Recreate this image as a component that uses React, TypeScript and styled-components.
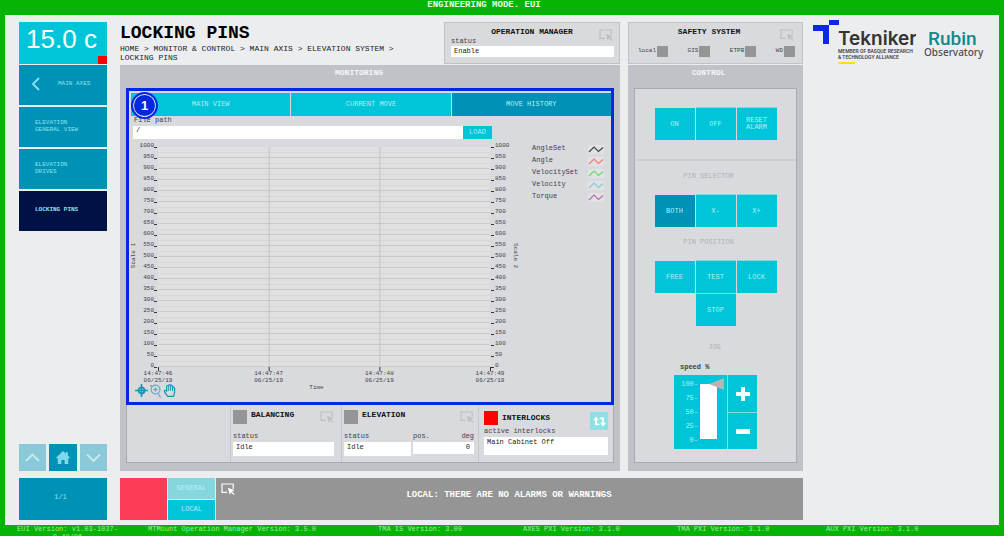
import React from "react";
import styled, { createGlobalStyle, css } from "styled-components";
import { FaRegHandPaper } from "react-icons/fa";

const color = {
  green: "#05b405",
  page: "#ecedef",
  panel: "#c1c2c7",
  inner: "#d9dade",
  line: "#c6c7cc",
  edge: "#a9aaaf",
  cyan: "#00c5d9",
  teal: "#0091b7",
  navy: "#001145",
  grey: "#959595",
  pale: "#8de2ec",
  text: "#404146",
  frame: "#0028e0",
};

const GlobalStyle = createGlobalStyle`
  * { box-sizing: border-box; }
  body {
    margin: 0;
    background: ${color.green};
    font-family: "Liberation Mono", "Courier New", monospace;
    font-size: 7px;
    line-height: 9px;
    color: ${color.text};
  }
  h1, h2, h3, p, ul, nav { margin: 0; padding: 0; }
  h2, h3 { font-size: 8px; line-height: 9px; }
  button, input { font: inherit; border: 0; padding: 0; margin: 0; border-radius: 0; }
  button { cursor: pointer; }
`;

const Page = styled.div`
  display: flex;
  flex-direction: column;
  min-height: 100vh;
`;

const ModeBar = styled.header`
  height: 15px;
  padding-right: 36px;
  text-align: center;
  color: #e4ffe4;
  font-size: 9px;
  font-weight: bold;
  line-height: 11px;
`;

const Body = styled.div`
  display: flex;
  flex: 1;
  margin: 0 5px;
  padding: 7px 0 5px 14px;
  background: ${color.page};
`;

const SideBar = styled.nav`
  display: flex;
  flex-direction: column;
  flex: 0 0 88px;
  margin-right: 13px;
`;

const Temperature = styled.div`
  position: relative;
  height: 42px;
  margin-bottom: 1px;
  padding-right: 3px;
  background: ${color.cyan};
  color: #fff;
  font: 26px/34px "Liberation Sans", Arial, sans-serif;
  text-align: center;
`;

const TemperatureFlag = styled.span`
  position: absolute;
  right: 0;
  bottom: 0;
  width: 9px;
  height: 8px;
  background: #f00;
`;

const SideList = styled.div`
  display: flex;
  flex-direction: column;
  gap: 2px;
`;

const SideItem = styled.button<{ $current?: boolean }>`
  display: flex;
  align-items: center;
  gap: 18px;
  height: 40px;
  padding: 0 12px 3px 16px;
  text-align: left;
  font-size: 6px;
  line-height: 7px;
  color: ${color.pale};
  background: ${(p) => (p.$current ? color.navy : color.teal)};
  font-weight: ${(p) => (p.$current ? "bold" : "normal")};
`;

const BackItem = styled(SideItem)`
  padding-left: 12px;
`;

const PageKeys = styled.div`
  display: grid;
  grid-template-columns: repeat(3, 1fr);
  gap: 3px;
  margin-top: auto;
`;

const PageKey = styled.button<{ $dim?: boolean }>`
  display: grid;
  place-items: center;
  height: 27px;
  background: ${(p) => (p.$dim ? "#8cc9d8" : color.teal)};
`;

const PageCount = styled.div`
  display: grid;
  place-items: center;
  height: 42px;
  padding: 0 5px 3px 0;
  margin-top: 7px;
  background: ${color.teal};
  color: ${color.pale};
`;

const Main = styled.main`
  display: grid;
  flex: 683 1 0;
  grid-template-columns: minmax(0, 500fr) minmax(0, 175fr);
  grid-template-rows: 42px 1fr 42px;
  column-gap: 8px;
  min-width: 0;
`;

const TitleRow = styled.div`
  display: flex;
  justify-content: space-between;
`;

const TitleBlock = styled.div`
  flex: 1;
  padding-right: 28px;
  color: #222;
  font-size: 8px;
`;

const Title = styled.h1`
  color: #000;
  font-size: 18px;
  line-height: 22px;
`;

const InfoCard = styled.section`
  border: 1px solid ${color.panel};
  background: ${color.inner};
`;

const ManagerCard = styled(InfoCard)`
  flex: 0 0 176px;
  padding: 4px 5px 0 6px;
`;

const CardHead = styled.div`
  display: flex;
  justify-content: center;
  height: 12px;
  color: #111;
  svg { margin: 2px 1px 0 auto; }
`;

const HeadTitle = styled.h2`
  flex: 1;
  text-align: center;
`;

const ManagerTitle = styled(HeadTitle)`
  padding-left: 14px;
`;

const Label = styled.label`
  display: block;
  white-space: nowrap;
`;

const TextBox = styled.input<{ $height?: number; $right?: boolean }>`
  display: block;
  width: 100%;
  height: ${(p) => p.$height ?? 14}px;
  padding: 0 4px ${(p) => ((p.$height ?? 14) > 12 ? 5 : 2)}px 3px;
  background: #fff;
  color: #222;
  text-align: ${(p) => (p.$right ? "right" : "left")};
`;

const InterlockBox = styled(TextBox)`
  padding-bottom: 8px;
`;

const ManagerLabel = styled(Label)`
  height: 7px;
  line-height: 5px;
`;

const SafetyCard = styled(InfoCard)`
  padding: 4px 7px 0 9px;
`;

const Lamps = styled.div`
  display: flex;
  justify-content: space-between;
  margin-top: 7px;
  font-size: 6px;
`;

const Lamp = styled.span`
  display: flex;
  gap: 1px;
`;

const LampLight = styled.i<{ $size: number; $on?: boolean }>`
  flex: none;
  width: ${(p) => p.$size}px;
  height: ${(p) => p.$size}px;
  background: ${(p) => (p.$on ? "#f00" : color.grey)};
`;

const Panel = styled.section`
  display: flex;
  flex-direction: column;
  margin: 1px 0 7px;
  padding: 0 6px 8px;
  background: ${color.panel};
`;

const PanelTitle = styled.h2`
  height: 23px;
  padding-top: 3px;
  color: #f5f5f8;
  text-align: center;
`;

const MonitoringTitle = styled(PanelTitle)`
  padding-right: 22px;
`;

const ControlTitle = styled(PanelTitle)`
  padding-right: 14px;
`;

const MonitorBox = styled.div`
  flex: 1;
  border: solid ${color.edge};
  border-width: 0 1px 1px;
  background: ${color.inner};
`;

const Highlight = styled.div`
  position: relative;
  height: 317px;
  margin: 0 -1px;
  padding: 2px 0 0 2px;
  border: 3px solid ${color.frame};
`;

const StepBadge = styled.span`
  position: absolute;
  top: 1px;
  left: 2px;
  display: grid;
  place-items: center;
  width: 27px;
  height: 27px;
  border: 2px solid ${color.frame};
  border-radius: 50%;
  background: ${color.frame};
  box-shadow: inset 0 0 0 1px #d8dcff;
  color: #fff;
  font: bold 13px/13px "Liberation Sans", Arial, sans-serif;
`;

const Tabs = styled.div`
  display: grid;
  grid-template-columns: repeat(3, 1fr);
  gap: 1px;
`;

const keyLook = css<{ $active?: boolean }>`
  background: ${(p) => (p.$active ? color.teal : color.cyan)};
  color: #b0eef4;
`;

const Tab = styled.button<{ $active?: boolean }>`
  ${keyLook}
  height: 23px;
`;

const PathRow = styled.div`
  display: grid;
  grid-template-columns: 1fr 29px;
  width: 361px;
  max-width: 100%;
  padding-left: 2px;
`;

const PathLabel = styled(Label)`
  grid-column: 1 / -1;
  height: 10px;
  padding-left: 1px;
`;

const LoadKey = styled.button`
  ${keyLook}
  height: 13px;
`;

const ChartRow = styled.div`
  display: flex;
  margin-top: 1px;
`;

const Chart = styled.figure`
  display: grid;
  flex: 1;
  grid-template-columns: 6px 21px minmax(0, 1fr) 20px 10px;
  margin: 0;
  font-size: 6px;
`;

const AxisName = styled.span<{ $flip?: boolean }>`
  writing-mode: vertical-rl;
  justify-self: center;
  align-self: center;
  line-height: 6px;
  transform: ${(p) => (p.$flip ? "rotate(180deg)" : "none")};
`;

const Axis = styled.ul<{ $right?: boolean }>`
  list-style: none;
  li {
    display: flex;
    flex-direction: ${(p) => (p.$right ? "row" : "row-reverse")};
    height: 11px;
    line-height: 11px;
  }
  li::before {
    content: "";
    width: 3px;
    height: 1px;
    margin: 7px 1px 0 ${(p) => (p.$right ? 1 : 0)}px;
    background: #333;
  }
`;

const Plot = styled.svg`
  display: block;
  width: 100%;
  height: 220px;
  margin-top: 7px;
  overflow: visible;
`;

const Legend = styled.ul`
  flex: 0 0 79px;
  margin: 4px 0 0 12px;
  padding-right: 7px;
  list-style: none;
  li {
    display: flex;
    justify-content: space-between;
    height: 12px;
  }
  svg { margin-top: 1px; background: #e2e2e4; }
`;

const TimeLabel = styled.p`
  margin: 13px 103px 0 0;
  padding-right: 6px;
  text-align: center;
  font-size: 6px;
  line-height: 8px;
`;

const Tools = styled.div`
  display: flex;
  gap: 1px;
  margin-top: -8px;
  padding-left: 4px;
`;

const ToolKey = styled.button`
  width: 13px;
  height: 14px;
  background: none;
  color: #1795b5;
`;

const StatusRow = styled.div`
  display: grid;
  grid-template-columns: 103fr 111fr 137fr 135fr;
  height: 57px;
`;

const StatusCard = styled.section`
  padding: 5px 7px 0 2px;
  border-left: 1px solid ${color.line};
`;

const ElevationCard = styled(StatusCard)`
  padding-right: 4px;
`;

const InterlockCard = styled(StatusCard)`
  padding: 6px 5px 0;
`;

const StatusHead = styled.div`
  display: flex;
  gap: 4px;
  height: 22px;
  color: #111;
  > svg, > button { margin-left: auto; margin-top: 1px; }
`;

const InterlockHead = styled(StatusHead)`
  height: 16px;
  h3 { padding-top: 2px; }
`;

const SwapKey = styled.button`
  display: grid;
  place-items: center;
  width: 18px;
  height: 18px;
  background: #8de0e4;
`;

const Fields = styled.div`
  display: flex;
  gap: 2px;
`;

const Field = styled.div<{ $grow?: number }>`
  flex: ${(p) => p.$grow ?? 1} 1 0;
  min-width: 0;
`;

const FieldHead = styled.div`
  display: flex;
  justify-content: space-between;
  height: 10px;
`;

const ControlBox = styled.div`
  flex: 1;
  border: 1px solid ${color.edge};
  background: ${color.inner};
`;

const PowerGroup = styled.div`
  padding: 19px 0;
  border-bottom: 2px solid #cdced2;
`;

const Keys = styled.div`
  display: grid;
  grid-template-columns: repeat(3, 40px);
  justify-content: center;
  gap: 1px;
`;

const Key = styled.button<{ $active?: boolean; $middle?: boolean }>`
  ${keyLook}
  height: 32px;
  line-height: 7px;
  grid-column: ${(p) => (p.$middle ? 2 : "auto")};
  & + & {
    box-shadow: ${(p) => (p.$middle ? "0 -1px" : "-1px 0")} #7fdbe4;
  }
`;

const GroupTitle = styled.h3`
  height: 34px;
  padding: 11px 14px 0 0;
  color: #b0b1b5;
  text-align: center;
  font-size: 7px;
  font-weight: normal;
`;

const JogTitle = styled(GroupTitle)`
  height: 37px;
  padding: 17px 2px 0 0;
`;

const Jog = styled.div`
  width: 83px;
  margin: 0 auto;
`;

const SpeedLabel = styled(Label)`
  height: 12px;
  padding-left: 6px;
  font-weight: bold;
`;

const JogGrid = styled.div`
  display: grid;
  grid-template-columns: 53px 29px;
  grid-template-rows: 37px 36px;
  gap: 1px;
  background: #7fdbe4;
`;

const SpeedBox = styled.div`
  display: flex;
  grid-row: 1 / 3;
  gap: 2px;
  padding: 3px 0 0 5px;
  background: ${color.cyan};
  color: #b0eef4;
`;

const SpeedScale = styled.ul`
  width: 19px;
  list-style: none;
  text-align: right;
  li { height: 14px; line-height: 12px; white-space: nowrap; }
`;

const SpeedSlider = styled.input`
  appearance: none;
  writing-mode: vertical-lr;
  direction: rtl;
  width: 24px;
  height: 67px;
  background: linear-gradient(#fff, #fff) 0 6px / 17px 55px no-repeat;
  &::-webkit-slider-runnable-track {
    width: 24px;
    height: 67px;
  }
  &::-webkit-slider-thumb {
    appearance: none;
    width: 15px;
    height: 12px;
    margin-left: 9px;
    background: #b5b5b5;
    clip-path: polygon(0 50%, 100% 0, 100% 100%);
  }
`;

const StepKey = styled.button`
  display: grid;
  place-items: center;
  background: ${color.cyan};
`;

const AlarmBar = styled.section`
  display: grid;
  grid-column: 1 / -1;
  grid-template-columns: 47px 47px minmax(0, 1fr);
  column-gap: 1px;
`;

const AlarmLight = styled.div`
  background: #fb3c57;
`;

const AlarmKeys = styled.div`
  display: grid;
  grid-template-rows: 1fr 1fr;
  gap: 1px;
`;

const AlarmKey = styled.button<{ $dim?: boolean }>`
  background: ${(p) => (p.$dim ? "#86d6de" : color.cyan)};
  color: #b8f0f5;
`;

const AlarmText = styled.div`
  display: flex;
  padding: 5px 20px 0 5px;
  background: ${color.grey};
  color: #fff;
  p {
    flex: 1;
    padding-top: 8px;
    text-align: center;
    font-size: 9px;
    font-weight: bold;
  }
`;

const Brands = styled.aside`
  display: flex;
  flex: 187 1 0;
  gap: 8px;
  padding-left: 9px;
  svg { flex: none; margin-top: -3px; }
`;

const Footer = styled.footer`
  display: grid;
  grid-template-columns: 116px 230px 145px 154px 149px 1fr;
  height: 11px;
  padding-left: 12px;
  overflow: hidden;
  color: #a6eda6;
  line-height: 8px;
  span:first-child { padding-right: 5px; text-align: center; }
  span { text-align: center; white-space: nowrap; }
  span + span { text-align: left; padding-left: 20px; }
`;

const SelectIcon = ({ tone }: { tone: string }) => (
  <svg width="14" height="12" viewBox="0 0 14 12" aria-hidden="true">
    <path d="M6 9.4H1V1h11.2v5" fill="none" stroke={tone} strokeWidth="1.2" />
    <path d="M6.8 4.8l6.8 2.5-2.6 1.1 2.6 2.7-1 .9-2.6-2.7-1.3 2.5z" fill={tone} />
  </svg>
);

const Chevron = ({ points }: { points: string }) => (
  <svg width="15" height="15" viewBox="0 0 15 15" aria-hidden="true">
    <polyline points={points} fill="none" stroke="#c3ecf2" strokeWidth="1.8" />
  </svg>
);

const scale = Array.from({ length: 21 }, (_, i) => 1000 - i * 50);
const times = ["14:47:46", "14:47:47", "14:47:48", "14:47:49"];
const series = [
  ["AngleSet", "#444"],
  ["Angle", "#f07c78"],
  ["VelocitySet", "#5fe06a"],
  ["Velocity", "#85c8dc"],
  ["Torque", "#bd66b4"],
];

const PlotArea = () => (
  <Plot role="img" aria-label="Move history">
    <rect width="100%" height="220" fill="#e0e0e1" />
    {scale.slice(1).map((v, i) => (
      <React.Fragment key={v}>
        <rect y={i * 11 + 5} width="100%" height="1" fill="#d8d8da" />
        <rect y={i * 11 + 10} width="100%" height="1" fill="#c9c9cc" />
      </React.Fragment>
    ))}
    {times.map((t, i) => (
      <svg key={t} x={`${(i * 100) / 3}%`} overflow="visible">
        {i > 0 && i < 3 && <rect width="1" height="220" fill="#c3c4c8" />}
        <rect y="220" width="1" height="4" fill="#333" />
        <text y="228" textAnchor="middle" fill={color.text}>{t}</text>
        <text y="235" textAnchor="middle" fill={color.text}>06/25/19</text>
      </svg>
    ))}
  </Plot>
);

export default function App() {
  return (
    <>
      <GlobalStyle />
      <Page>
        <ModeBar>ENGINEERING MODE. EUI</ModeBar>
        <Body>
          <SideBar>
            <Temperature>
              15.0 c<TemperatureFlag />
            </Temperature>
            <SideList>
              <BackItem>
                <svg width="9" height="14" viewBox="0 0 9 14" aria-hidden="true">
                  <polyline points="8,1 2,7 8,13" fill="none" stroke={color.pale} strokeWidth="1.8" />
                </svg>
                MAIN AXES
              </BackItem>
              <SideItem>ELEVATION<br />GENERAL VIEW</SideItem>
              <SideItem>ELEVATION<br />DRIVES</SideItem>
              <SideItem $current>LOCKING PINS</SideItem>
            </SideList>
            <PageKeys>
              <PageKey $dim aria-label="Previous page"><Chevron points="1,11 7.5,4.5 14,11" /></PageKey>
              <PageKey aria-label="Home">
                <svg width="14" height="13" viewBox="0 0 14 13" aria-hidden="true">
                  <path d="M7 0l2.8 2.7V1h2v3.6L14 6.8l-.8.8-1-.6v6H8.6V9H5.4v4H1.8V7l-1 .6-.8-.8z" fill="#7fd9ea" />
                </svg>
              </PageKey>
              <PageKey $dim aria-label="Next page"><Chevron points="1,4.5 7.5,11 14,4.5" /></PageKey>
            </PageKeys>
            <PageCount>1/1</PageCount>
          </SideBar>

          <Main>
            <TitleRow>
              <TitleBlock>
                <Title>LOCKING PINS</Title>
                <p>HOME &gt; MONITOR &amp; CONTROL &gt; MAIN AXIS &gt; ELEVATION SYSTEM &gt; <br />LOCKING PINS</p>
              </TitleBlock>
              <ManagerCard>
                <CardHead>
                  <ManagerTitle>OPERATION MANAGER</ManagerTitle>
                  <SelectIcon tone="#bfc0c4" />
                </CardHead>
                <ManagerLabel htmlFor="manager">status</ManagerLabel>
                <TextBox id="manager" $height={11} defaultValue="Enable" />
              </ManagerCard>
            </TitleRow>
            <SafetyCard>
              <CardHead>
                <HeadTitle>SAFETY SYSTEM</HeadTitle>
                <SelectIcon tone="#bfc0c4" />
              </CardHead>
              <Lamps>
                {["local", "GIS", "ETPB", "WD"].map((name) => (
                  <Lamp key={name}>{name}<LampLight $size={11} /></Lamp>
                ))}
              </Lamps>
            </SafetyCard>

            <Panel>
              <MonitoringTitle>MONITORING</MonitoringTitle>
              <MonitorBox>
                <Highlight>
                  <Tabs>
                    <Tab>MAIN VIEW</Tab>
                    <Tab>CURRENT MOVE</Tab>
                    <Tab $active>MOVE HISTORY</Tab>
                  </Tabs>
                  <PathRow>
                    <PathLabel htmlFor="path">File path</PathLabel>
                    <TextBox id="path" $height={13} defaultValue="/" />
                    <LoadKey>LOAD</LoadKey>
                  </PathRow>
                  <ChartRow>
                    <Chart>
                      <AxisName $flip>Scale 1</AxisName>
                      <Axis>{scale.map((v) => <li key={v}>{v}</li>)}</Axis>
                      <PlotArea />
                      <Axis $right>{scale.map((v) => <li key={v}>{v}</li>)}</Axis>
                      <AxisName>Scale 2</AxisName>
                    </Chart>
                    <Legend>
                      {series.map(([name, tone]) => (
                        <li key={name}>
                          {name}
                          <svg width="16" height="9" viewBox="0 0 16 9" aria-hidden="true">
                            <polyline points="1,7 6,2 10.5,6.5 15,2.5" fill="none" stroke={tone} strokeWidth="1.2" />
                          </svg>
                        </li>
                      ))}
                    </Legend>
                  </ChartRow>
                  <TimeLabel>Time</TimeLabel>
                  <Tools>
                    <ToolKey aria-label="Cursor">
                      <svg width="13" height="13" viewBox="0 0 13 13">
                        <path d="M6.5 0v13M0 6.5h13" stroke="currentColor" strokeWidth="1.6" />
                        <circle cx="6.5" cy="6.5" r="3" fill="none" stroke="currentColor" strokeWidth="1.8" />
                      </svg>
                    </ToolKey>
                    <ToolKey aria-label="Zoom">
                      <svg width="13" height="14" viewBox="0 0 13 14">
                        <circle cx="6.5" cy="5.5" r="4.4" fill="none" stroke="#6ea5c4" strokeWidth="1.2" />
                        <path d="M6.5 3.5v4M4.5 5.5h4M9 9.5l2.5 4" stroke="#6ea5c4" strokeWidth="1.3" />
                        <rect x="1" y="1" width="2" height="1.5" fill="#3be03b" />
                      </svg>
                    </ToolKey>
                    <ToolKey aria-label="Pan"><FaRegHandPaper size={13} /></ToolKey>
                  </Tools>
                  <StepBadge>1</StepBadge>
                </Highlight>
                <StatusRow>
                  <div />
                  <StatusCard>
                    <StatusHead>
                      <LampLight $size={14} />
                      <h3>BALANCING</h3>
                      <SelectIcon tone="#bfc0c4" />
                    </StatusHead>
                    <FieldHead><Label htmlFor="balancing">status</Label></FieldHead>
                    <TextBox id="balancing" defaultValue="Idle" />
                  </StatusCard>
                  <ElevationCard>
                    <StatusHead>
                      <LampLight $size={14} />
                      <h3>ELEVATION</h3>
                      <SelectIcon tone="#bfc0c4" />
                    </StatusHead>
                    <Fields>
                      <Field $grow={67}>
                        <FieldHead><Label htmlFor="elevation">status</Label></FieldHead>
                        <TextBox id="elevation" defaultValue="Idle" />
                      </Field>
                      <Field $grow={61}>
                        <FieldHead><Label htmlFor="position">pos.</Label><span>deg</span></FieldHead>
                        <TextBox id="position" $height={12} $right defaultValue="0" />
                      </Field>
                    </Fields>
                  </ElevationCard>
                  <InterlockCard>
                    <InterlockHead>
                      <LampLight $size={14} $on />
                      <h3>INTERLOCKS</h3>
                      <SwapKey aria-label="Reset interlocks">
                        <svg width="13" height="11" viewBox="0 0 13 11" aria-hidden="true">
                          <path d="M3 3v5.4h3.2M6.8 2.3H10v5" fill="none" stroke="#fff" strokeWidth="1.8" />
                          <path d="M0 4.2L3 .6l3 3.6zM7 6.8h6l-3 3.6z" fill="#fff" />
                        </svg>
                      </SwapKey>
                    </InterlockHead>
                    <FieldHead><Label htmlFor="interlocks">active interlocks</Label></FieldHead>
                    <InterlockBox id="interlocks" $height={18} defaultValue="Main Cabinet Off" />
                  </InterlockCard>
                </StatusRow>
              </MonitorBox>
            </Panel>

            <Panel>
              <ControlTitle>CONTROL</ControlTitle>
              <ControlBox>
                <PowerGroup>
                  <Keys>
                    <Key>ON</Key>
                    <Key>OFF</Key>
                    <Key>RESET<br />ALARM</Key>
                  </Keys>
                </PowerGroup>
                <GroupTitle>PIN SELECTOR</GroupTitle>
                <Keys>
                  <Key $active>BOTH</Key>
                  <Key>X-</Key>
                  <Key>X+</Key>
                </Keys>
                <GroupTitle>PIN POSITION</GroupTitle>
                <Keys>
                  <Key>FREE</Key>
                  <Key>TEST</Key>
                  <Key>LOCK</Key>
                  <Key $middle>STOP</Key>
                </Keys>
                <JogTitle>JOG</JogTitle>
                <Jog>
                  <SpeedLabel htmlFor="speed">speed %</SpeedLabel>
                  <JogGrid>
                    <SpeedBox>
                      <SpeedScale>
                        {[100, 75, 50, 25, 0].map((v) => <li key={v}>{v}-</li>)}
                      </SpeedScale>
                      <SpeedSlider id="speed" type="range" min="0" max="100" defaultValue="100" />
                    </SpeedBox>
                    <StepKey aria-label="Increase speed">
                      <svg width="14" height="14" aria-hidden="true">
                        <path d="M7 0v14M0 7h14" stroke="#fff" strokeWidth="4" />
                      </svg>
                    </StepKey>
                    <StepKey aria-label="Decrease speed">
                      <svg width="14" height="5" aria-hidden="true">
                        <rect width="14" height="5" fill="#fff" />
                      </svg>
                    </StepKey>
                  </JogGrid>
                </Jog>
              </ControlBox>
            </Panel>

            <AlarmBar>
              <AlarmLight />
              <AlarmKeys>
                <AlarmKey $dim>GENERAL</AlarmKey>
                <AlarmKey>LOCAL</AlarmKey>
              </AlarmKeys>
              <AlarmText>
                <SelectIcon tone="#fff" />
                <p>LOCAL: THERE ARE NO ALARMS OR WARNINGS</p>
              </AlarmText>
            </AlarmBar>
          </Main>

          <Brands>
            <svg width="104" height="48" viewBox="0 0 104 48" role="img" aria-label="Tekniker">
              <path d="M1 6h16v19h-6V12H1zM17 1h10v5H17z" fill="#0a28e6" />
              <text x="26" y="26" fontFamily="Inter, sans-serif" fontSize="19" fontWeight="600" fill="#343434">Tekniker</text>
              <text x="26" y="34" fontFamily="Roboto, sans-serif" fontSize="5" fontWeight="500" fill="#333">MEMBER OF BASQUE RESEARCH</text>
              <text x="26" y="40" fontFamily="Roboto, sans-serif" fontSize="5" fontWeight="500" fill="#333">&amp; TECHNOLOGY ALLIANCE</text>
              <rect x="26" y="43" width="17" height="2" fill="#ffdf1a" />
            </svg>
            <svg width="64" height="44" viewBox="0 0 64 44" role="img" aria-label="Rubin Observatory">
              <text x="4" y="26" fontFamily="Roboto, sans-serif" fontSize="19" fontWeight="500" fill="#0f8a88">Rubin</text>
              <text x="0" y="37" fontFamily="'Noto Sans', sans-serif" fontSize="10" fontWeight="500" fill="#4c4d50">Observatory</text>
            </svg>
          </Brands>
        </Body>
        <Footer>
          <span>EUI Version: v1.03-1037-<br />0.40/06</span>
          <span>MTMount Operation Manager Version: 3.5.0</span>
          <span>TMA IS Version: 3.00</span>
          <span>AXES PXI Version: 3.1.0</span>
          <span>TMA PXI Version: 3.1.0</span>
          <span>AUX PXI Version: 3.1.0</span>
        </Footer>
      </Page>
    </>
  );
}
